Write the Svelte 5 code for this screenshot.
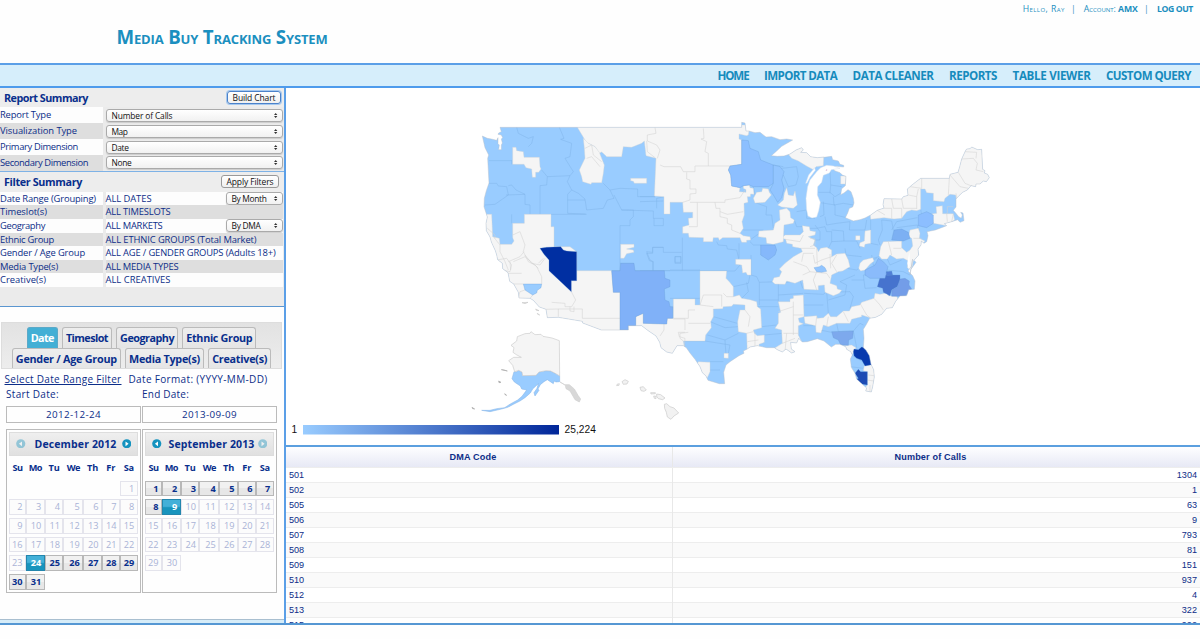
<script>
  function fit(node, width) {
    const count = [...node.textContent.trim()].length;
    const natural = node.getBoundingClientRect().width;
    node.style.letterSpacing = `${(width - natural) / count}px`;
  }

  const nav = [['HOME', 31], ['IMPORT DATA', 73], ['DATA CLEANER', 81], ['REPORTS', 48], ['TABLE VIEWER', 78], ['CUSTOM QUERY', 85]];

  const report = [
    ['Report Type', 51, 'Number of Calls', 61],
    ['Visualization Type', 77, 'Map', 16],
    ['Primary Dimension', 78, 'Date', 17],
    ['Secondary Dimension', 88, 'None', 20]
  ];

  const filters = [
    ['Date Range (Grouping)', 96, 'ALL DATES', 46, 'By Month', 35],
    ['Timeslot(s)', 47, 'ALL TIMESLOTS', 65],
    ['Geography', 45, 'ALL MARKETS', 57, 'By DMA', 29],
    ['Ethnic Group', 54, 'ALL ETHNIC GROUPS (Total Market)', 151],
    ['Gender / Age Group', 85, 'ALL AGE / GENDER GROUPS (Adults 18+)', 170],
    ['Media Type(s)', 58, 'ALL MEDIA TYPES', 73],
    ['Creative(s)', 46, 'ALL CREATIVES', 65]
  ];

  const tabs = [
    [['Date', 23, true], ['Timeslot', 42], ['Geography', 54], ['Ethnic Group', 66]],
    [['Gender / Age Group', 101], ['Media Type(s)', 71], ['Creative(s)', 55]]
  ];

  const days = [['Su', 10], ['Mo', 13], ['Tu', 11], ['We', 13], ['Th', 11], ['Fr', 9], ['Sa', 10]];

  const months = [
    { name: 'December 2012', width: 82, prev: false, next: true, offset: 6, count: 31, from: 24, to: 31, picked: 24 },
    { name: 'September 2013', width: 86, prev: true, next: false, offset: 0, count: 30, from: 1, to: 9, picked: 9 }
  ];

  const rows = [[501, 1304], [502, 1], [505, 63], [506, 9], [507, 793], [508, 81], [509, 151], [510, 937], [512, 4], [513, 322], [515, 922]];

  // The map is drawn in sections, each in thirds of a pixel from its own origin.
  const section = (x, y, text) =>
    text.trim().split(/\s+/).map((p) => {
      const [a, b] = p.split(',').map(Number);
      return `${(x + a / 3).toFixed(2)},${(y + b / 3).toFixed(2)}`;
    }).join(' ');

  const outline = [
    section(470, 115, '37,63 52,70 64,72 80,76 84,68 84,86 88,90 86,104 94,104 94,90 97,84 94,72 98,68 94,60 84,58 86,54 94,50 90,37'),
    section(640, 115, '305,37 305,22 315,24 318,48 327,48 345,53 360,52 378,66 395,65 420,74 440,72 458,75 425,94 410,108 394,122 412,124 432,123 450,117 468,105 485,98 490,105 482,112 500,113 512,125 532,128 552,126'),
    section(810, 115, '42,127 65,124 68,134 85,138 90,148 101,151 101,156 80,154 68,158 74,167 90,173 98,181 108,184 106,212 95,221 92,239 102,234 114,224 123,230 130,250 132,264 128,276 118,280 113,294 106,308 130,318 150,314 165,309 182,300 202,286 222,279 219,269 222,251 275,252 280,245 294,241 292,222 307,209 320,199 332,190 418,190 420,178 444,172 449,155 455,132 466,108 470,102 480,101 485,96 503,104 515,103 518,163 525,167 523,174 533,178 538,188 529,200 520,198 510,207 498,207 497,215 483,212 472,225 458,232 447,242 438,252 438,276 430,286 437,294 446,305 454,310 457,300 452,292 459,294 462,317 450,322 443,314 425,320 403,326 410,332 376,345 351,350 354,362 350,380 342,385 334,378 333,390 324,402 326,420 312,436 318,442 302,464 300,480'),
    section(670, 255, '728,12 724,35 714,48 728,62 735,78 733,103 716,104 710,122 690,123 677,139 667,158 650,160 635,178 617,187 599,190 588,210 580,223 582,250 580,278 588,286 598,302 603,328 611,344 613,366 608,395 604,411 587,408 590,399 577,388 560,372 555,355 544,337 541,312 547,300 542,290 530,283 527,275 510,268 497,268 484,276 462,258 442,251 412,260 397,261 386,250 380,264 362,262 364,282 375,290 365,294 348,282 337,291 322,284 313,278 290,278 262,272 240,276 232,282 220,288 222,295 207,302 180,320 168,330 161,352 164,386 148,386 114,376 108,363 97,353 90,335 75,313 60,294 49,278 40,272 21,272 7,295'),
    section(470, 255, '590,291 573,278 569,262 558,243 533,226 515,212 475,212 475,225 450,225 394,225 338,204 337,199 265,187 232,188 228,163 208,156 190,136 180,130 147,129 145,112 131,87 119,79 114,53 98,41 97,25 83,14 80,0'),
    section(470, 115, '76,407 64,381 60,366 49,347 48,325 52,306 42,275 43,250 49,227 57,204 55,166 53,130 56,120 45,98')
  ].join(' ');

  const grey = [
    [640, 115, '-192,30 -180,50 -165,75 -168,84 -155,85 -135,95 -122,115 -115,111 -105,120 -100,125 -55,125 -50,95 -25,97 5,85 13,78 18,122 48,130 43,243 72,245 72,297 90,297 90,262 128,262 130,292 158,292 158,308 145,310 147,330 128,335 128,355 145,355 147,367 190,368 190,380 218,380 220,368 235,368 238,376 248,368 300,368 305,382 320,382 320,376 332,375 330,365 310,362 300,355 310,340 306,320 313,300 312,265 324,262 322,245 331,245 332,237 342,238 340,220 330,218 328,210 310,212 310,220 318,224 318,232 298,230 300,218 275,213 272,180 265,165 270,153 305,148 305,75 297,72 297,57 320,62 325,60 330,30'],
    [470, 115, '340,70 355,85 375,95 388,112 395,130 403,150 400,175 395,203 365,203 363,208 338,200 335,185 328,165 345,130 343,100'],
    [470, 115, '128,97 138,97 140,107 160,110 162,127 208,127 210,155 213,162 206,172 197,172 197,187 187,187 185,162 168,158 162,148 128,148'],
    [470, 115, '482,190 530,190 530,205 493,205 490,199 482,197'],
    [470, 115, '452,388 492,388 492,397 470,402 490,405 492,412 470,416 462,430 452,430'],
    [470, 115, '20,298 65,298 66,320 68,365 88,370 90,388 125,388 132,378 128,368 128,325 163,325 163,298 243,298 243,335 252,335 252,395 300,395 320,410 320,467 425,467 430,532 450,532 450,700 0,700'],
    [670, 255, '-103,212 -103,185 -80,175 -80,205 -10,207 -8,190 10,190 10,132 75,132 75,150 90,150 90,48 170,48 168,70 178,80 190,95 190,125 208,120 215,130 240,134 260,140 262,155 272,162 275,218 250,225 253,235 262,242 283,240 283,262 267,268 270,295 232,300 230,235 205,230 203,200 210,165 225,165 225,150 190,148 185,154 160,155 158,161 130,162 130,185 122,200 124,218 107,240 105,258 40,258 50,320 -103,320'],
    [670, 255, '85,320 120,322 120,350 112,368 95,365 80,330'],
    [670, 255, '162,295 175,295 175,310 162,309'],
    [670, 255, '197,13 243,13 243,60 232,60 228,52 218,54 215,30 197,28'],
    [670, 255, '325,140 360,140 360,132 370,130 370,122 400,120 402,185 385,190 388,202 400,206 385,212 385,240 397,265 375,320 310,310 313,280 337,265 335,225 315,220 325,205 325,175 332,172'],
    [670, 255, '402,185 440,182 442,190 460,188 475,175 482,185 500,185 520,168 538,168 545,155 570,150 575,142 612,130 615,115 630,118 650,114 655,122 680,124 700,170 640,210 600,188 575,180 575,185 545,193 540,205 500,205 475,215 460,210 453,234 438,232 437,212 405,205'],
    [670, 255, '307,80 312,68 328,65 335,50 328,42 345,25 370,5 397,-10 393,-20 368,-25 367,-32 350,-35 347,-47 335,-50 345,-60 390,-60 400,-70 397,-88 418,-85 420,-73 437,-70 435,-60 415,-55 435,-45 430,-30 440,-22 445,-10 452,-20 470,-23 485,-15 485,5 500,-3 525,-5 535,15 540,35 518,48 505,50 485,60 480,85 500,92 502,102 515,106 508,115 490,122 465,112 463,90 445,92 445,105 402,103 398,75 375,85 350,78 345,88 315,87'],
    [640, 115, '340,250 350,232 365,230 368,220 385,222 388,232 394,240 375,262 345,264'],
    [640, 115, '413,270 430,255 433,235 440,218 445,240 460,242 465,228 472,270 460,280 425,276'],
    [640, 115, '418,285 440,280 450,290 452,308 463,315 460,325 432,330 430,380 400,388 380,385 378,368 355,365 357,348 400,345 405,325 420,315'],
    [640, 115, '440,112 490,85 552,110 550,152 528,155 520,164 498,152 475,138 455,130'],
    [810, 115, '92,183 110,183 108,207 92,207'],
    [810, 115, '137,362 150,362 150,375 137,375'],
    [810, 115, '165,348 182,345 182,385 165,388 163,397 148,393 150,383 163,378'],
    [810, 115, '182,313 180,290 222,240 335,170 420,170 460,90 550,90 550,210 440,262 437,240 420,238 405,250 402,260 370,257 370,235 350,233 345,222 332,222 332,283 320,287 305,285 290,290 275,310 252,312 222,308'],
    [810, 115, '378,275 397,272 398,296 430,296 434,315 410,332 370,325 365,297 380,295'],
    [810, 115, '207,422 212,395 220,380 275,378 275,398 290,412 300,405 308,393 305,370 295,365 300,345 325,340 330,355 328,370 345,378 325,402 326,430 310,437 305,464 292,458 294,437 280,430 260,432 240,420 232,432 215,432'],
    [810, 115, '146,460 150,445 160,435 188,428 192,438 180,448 165,465 152,468'],
    [670, 255, '520,272 545,270 558,278 548,297 530,295'],
    [670, 255, '600,328 630,330 620,430 575,412 592,390 592,350 580,347 583,332']
  ];

  const toned = [
    [640, 115, '305,75 325,77 330,100 355,110 362,135 400,150 400,205 385,215 340,215 328,210 310,212 300,218 275,213 272,180 265,165 270,153 305,148', '#8cbfff'],
    [640, 115, '400,150 420,155 432,170 425,195 432,220 425,248 413,262 400,240 390,225 400,205', '#92c5ff'],
    [640, 115, '362,390 405,390 410,405 405,420 385,435 362,420', '#85b8fb'],
    [470, 255, '425,47 450,47 452,25 492,25 495,47 583,47 585,70 600,75 600,95 583,102 585,135 597,140 600,155 608,155 608,190 592,190 590,207 520,205 520,175 497,185 497,212 475,212 475,225 450,225 450,112 430,112', '#80b1f8'],
    [470, 115, '210,400 230,397 272,395 280,405 290,408 320,410 320,497 304,497 304,530 237,467 237,435 222,418', '#002fa2'],
    [470, 255, '160,87 215,87 213,98 202,106 200,114 188,120 165,105', '#99ccff'],
    [670, 255, '432,38 448,35 455,31 465,38 470,49 455,52 440,50', '#92c5ff'],
    [670, 255, '632,60 650,58 652,50 665,60 690,60 690,78 682,95 665,105 660,122 640,112 638,100 622,95', '#4673ce'],
    [670, 255, '690,72 705,70 718,78 717,90 725,102 705,124 665,124 665,105 682,95', '#739de8'],
    [670, 255, '485,230 550,228 548,250 536,255 535,271 512,270 505,255 490,248', '#7da9ed'],
    [670, 255, '550,290 552,282 565,284 575,276 585,278 598,298 605,329 585,333 575,315 560,310 552,302', '#083aae'],
    [670, 255, '555,355 565,343 572,350 592,350 592,390 578,388 556,375 565,370', '#1d4bb4'],
    [810, 115, '252,345 275,342 295,352 300,370 280,378 245,375', '#7cb0f3'],
    [810, 115, '165,480 165,465 195,450 205,430 220,440 234,455 225,490 180,490', '#8abbfb'],
    [810, 115, '228,470 245,468 248,480 230,482', '#517fd7'],
    [810, 115, '325,300 350,290 370,300 370,325 350,338 325,332', '#8cbeff']
  ];

  const blueLines = [
    [470, 115, 'M57,137 125,137 M125,148 125,135 M140,37 145,55 175,70 190,65 185,85 175,95 M268,37 282,70 272,73 305,85 300,125 285,130 310,170 300,182 232,185 215,165 M57,205 80,205 85,213 110,215 115,240 75,268 45,270 M115,212 125,210 138,225 165,238 108,240 M165,238 165,268 180,270 180,298 M210,298 210,212 230,210 232,185 M300,182 292,200 305,225 293,238 293,295 347,297 M293,255 345,255 M305,225 325,235 345,252 350,285 400,280 412,255 432,250 420,225 400,205 M420,225 450,220 503,222 503,245 555,245 M432,240 455,285 490,285 490,305 480,315 480,332 450,332 450,467 M455,285 550,288 550,310 580,310 580,332 552,332 552,310 M560,280 560,250 580,246 M243,298 350,298 M125,298 125,325 M530,410 548,412 548,397 580,397 M530,410 540,435 550,440 550,467 M425,467 600,467 M450,445 490,445 490,465'],
    [640, 115, 'M0,245 45,245 M0,260 70,258 M127,368 127,467 M0,467 260,467 M230,380 235,390 260,392 262,402 290,405 297,435 M297,385 297,430 M330,375 365,350 M310,345 370,345 M365,270 380,275 378,300 395,300 400,340 M345,262 365,270 M330,380 340,390 362,390 M333,420 333,480 M20,415 38,415 38,397 70,397 70,412 125,412 M105,425 123,425 123,445 105,445Z M20,415 28,437 38,440 38,467 M425,160 470,155 475,185 468,210 445,215 430,180 M400,150 430,155 M360,200 360,215 M470,290 500,285 500,310 525,310 M463,315 470,335 487,335 M525,330 540,350 540,375 525,375 M340,215 345,240'],
    [810, 115, 'M25,232 60,232 75,245 108,225 M60,165 62,210 95,215 M62,210 60,235 M70,245 72,270 100,265 130,270 M40,260 42,300 30,305 M25,262 75,270 75,300 110,308 M0,340 20,340 45,335 50,350 65,350 65,380 55,400 M65,345 100,348 102,378 65,380 M45,305 50,330 80,325 120,320 M102,378 140,378 150,400 M120,320 118,345 165,345 170,315 M182,310 182,345 M182,385 205,390 M215,315 217,345 205,375 210,390 M215,315 245,318 250,345 M245,345 260,320 322,308 M260,338 322,330 325,345 M105,400 108,420 155,425 M190,430 207,425 M232,432 240,450 275,435 M332,283 335,300'],
    [670, 255, 'M0,130 90,130 M15,5 32,5 32,22 15,22Z M0,45 90,45 M170,48 195,48 210,30 M243,60 260,65 268,82 325,80 M268,82 268,150 M190,95 235,85 240,60 M230,82 235,110 215,130 M268,135 325,135 M325,80 325,140 M262,155 325,155 M276,215 320,210 M325,80 330,85 390,75 398,100 M325,120 400,115 M402,115 460,118 470,110 475,175 M475,135 525,120 530,90 510,80 555,60 M465,112 540,110 550,125 540,160 M402,150 460,150 M400,212 440,212 440,232 M455,232 455,215 M450,225 485,232 M500,205 505,230 550,228 570,205 580,210 M550,228 560,278 M130,185 202,205 M120,200 165,218 205,215 M112,240 165,255 205,235 M105,258 180,270 175,295 M165,255 168,300 M40,258 105,258 M120,320 160,320 M120,345 150,345 M580,60 585,100 620,98 M580,60 620,62 620,50 650,48 M545,75 582,75 M530,40 560,45 590,22 620,10 M540,335 580,340 M545,300 575,318 M283,240 337,235 M605,0 610,30 650,45 700,50 720,60']
  ];

  const greyLines = [
    [640, 115, 'M45,37 48,55 22,60 22,78 50,90 60,105 52,130 M20,78 22,110 45,128 M190,40 192,70 183,72 200,80 195,110 205,115 205,153 M60,150 72,155 122,155 130,170 165,170 165,153 305,153 M140,172 140,192 150,195 150,222 168,222 168,235 150,237 150,255 128,262 M150,262 172,262 172,335 147,335 M172,262 255,262 255,255 300,248 315,225 M225,262 228,280 240,280 240,305 262,310 262,325 275,330 275,345 300,355 M240,290 262,298 310,290'],
    [470, 115, 'M345,100 365,90 370,120 395,140 M350,130 365,125 390,155 M52,340 75,360 75,370 M70,365 90,390 90,410 105,440 115,465 M128,360 150,350 165,390 160,410 175,440 195,450 205,460 M115,440 150,425 162,410 M120,440 122,465 M205,445 220,430'],
    [470, 255, 'M80,15 110,10 125,30 120,50 98,45 M130,20 165,5 200,35 215,65 215,87 M165,0 185,25 210,30 225,10 M128,87 160,87 M110,55 155,55 M165,105 150,110 145,128 M180,130 190,118 M304,110 317,135 305,155 285,155 285,145 245,142 M227,163 265,162 265,185 M265,162 337,162 337,190 450,190 M300,155 300,168 312,170 312,155 M570,243 582,225 582,207 M610,192 645,192 645,225 M645,232 625,232 628,245 645,250 642,290'],
    [670, 255, 'M10,190 55,190 55,165 75,165 M55,205 120,205 M40,258 30,250 30,235 55,232 M100,120 90,150 130,155 M190,125 170,125 160,115 M100,120 155,120 155,155 M230,235 250,230 M225,165 240,185 235,215 M232,260 265,255 M255,232 255,275 M370,140 370,240 M370,180 400,180 M340,235 385,235 M337,265 375,250 M350,235 345,290 M325,170 370,155 M440,185 437,212 M475,185 470,215 M520,170 535,200 M570,145 590,180 600,188 M612,130 630,150 640,165 M370,20 410,35 420,50 398,60 M430,0 435,25 455,15 485,5 M418,50 470,55 480,70 M500,0 485,25 500,50 M393,-20 435,-20 M345,-47 390,-40 400,-60 M430,-5 400,-5 395,20 M595,360 612,362 M590,375 612,378 M600,390 600,410 M440,50 430,75 440,105'],
    [810, 115, 'M245,252 250,280 275,280 275,310 M275,252 280,280 320,280 M222,280 245,280 245,310 M200,285 225,300 M295,240 320,245 325,222 M300,215 335,220 335,190 M320,245 320,282 M418,190 415,240 M420,180 450,215 475,220 M445,172 465,205 490,215 M455,132 490,130 502,145 498,165 520,170 M465,110 500,112 498,130 M430,275 412,275 412,295 M440,250 438,235 M410,295 412,320 M430,297 425,320 M0,370 15,372 15,390 0,395 M20,400 22,450 M60,417 62,460 M235,380 245,420 M275,400 250,400 M310,370 335,370']
  ];

  const islands = [
    '441,388 448,386 447,391 440,392', '456,380 465,374 475,379 471,387 460,388', '510,397 520,395 529,405 522,409 513,407', '542,413 556,413 556,416 543,417', '560,417 572,419 585,429 578,434 565,431 560,424', '551,423 558,424 558,431 553,430', '583,448 590,446 600,455 612,459 626,474 612,483 603,493 592,486 589,472 584,460', '156,143 174,142 165,146', '197,162 207,167 199,166', '202,175 209,180 203,178'
  ];
</script>

{#snippet arrows()}
  <svg class="arrows" viewBox="0 0 4 6"><path d="M0 2.4 2 0 4 2.4ZM0 3.6H4L2 6Z" /></svg>
{/snippet}

{#snippet circle(on, dir)}
  <svg class="circle" class:off={!on} viewBox="0 0 10 10">
    <circle cx="5" cy="5" r="4.8" />
    <path d={dir === 'prev' ? 'M6.3 2.5 3.1 5 6.3 7.5Z' : 'M3.7 2.5 6.9 5 3.7 7.5Z'} />
  </svg>
{/snippet}

<div class="page">
  <header>
    <div class="account">
      <span class="sc" use:fit={42}>Hello, Ray</span><i>|</i>
      <span class="sc" use:fit={54}>Account: <b>AMX</b></span><i>|</i>
      <b use:fit={36}>LOG OUT</b>
    </div>
    <h1><span use:fit={211}>Media Buy Tracking System</span></h1>
  </header>
  <nav>{#each nav as [label, w]}<a href="#top"><span use:fit={w}>{label}</span></a>{/each}</nav>

  <main>
    <aside>
      <section class="summary">
        <div class="head"><h2 use:fit={84}>Report Summary</h2><button class="focus"><span use:fit={43}>Build Chart</span></button></div>
        {#each report as [label, w, value, vw]}
          <div class="row tall">
            <div class="label"><span use:fit={w}>{label}</span></div>
            <div class="select"><span use:fit={vw}>{value}</span>{@render arrows()}</div>
          </div>
        {/each}
        <div class="head second"><h2 use:fit={78}>Filter Summary</h2><button><span use:fit={47}>Apply Filters</span></button></div>
        {#each filters as [label, w, value, vw, choice, cw]}
          <div class="row short">
            <div class="label"><span use:fit={w}>{label}</span></div>
            <div class="value"><span use:fit={vw}>{value}</span>
              {#if choice}<div class="select small"><span use:fit={cw}>{choice}</span>{@render arrows()}</div>{/if}
            </div>
          </div>
        {/each}
      </section>

      <section class="picker">
        <div class="tabs">
          {#each tabs as line}
            <div class="tabline">
              {#each line as [label, w, on]}<div class="tab" class:on><span use:fit={w}>{label}</span></div>{/each}
            </div>
          {/each}
        </div>
        <div class="hint"><u use:fit={117}>Select Date Range Filter</u><span use:fit={139}>Date Format: (YYYY-MM-DD)</span></div>
        <div class="ends"><div><span use:fit={53}>Start Date:</span></div><div><span use:fit={47}>End Date:</span></div></div>
        <div class="pair inputs"><div><span use:fit={55}>2012-12-24</span></div><div><span use:fit={55}>2013-09-09</span></div></div>
        <div class="pair">
          {#each months as m}
            <div class="calendar">
              <div class="month">{@render circle(m.prev, 'prev')}<span use:fit={m.width}>{m.name}</span>{@render circle(m.next, 'next')}</div>
              <div class="grid week">{#each days as [d, w]}<div><span use:fit={w}>{d}</span></div>{/each}</div>
              <div class="grid dates">
                {#each Array(m.offset) as _}<div></div>{/each}
                {#each Array(m.count) as _, i}
                  <div class="day" class:live={i + 1 >= m.from && i + 1 <= m.to} class:picked={i + 1 === m.picked}>{i + 1}</div>
                {/each}
              </div>
            </div>
          {/each}
        </div>
      </section>
    </aside>

    <div class="content">
      <div class="map">
        <svg viewBox="286 88 914 357" width="914" height="357">
          <defs>
            <clipPath id="land"><polygon points={outline} /></clipPath>
            <linearGradient id="scale"><stop offset="0" stop-color="#99ccff" /><stop offset="1" stop-color="#002699" /></linearGradient>
          </defs>
          <polygon points={outline} fill="#99ccff" />
          <g clip-path="url(#land)">
            {#each blueLines as [x, y, d]}<path {d} transform={`translate(${x} ${y}) scale(.33333)`} class="blueline" />{/each}
            {#each grey as [x, y, p]}<polygon points={section(x, y, p)} class="greyarea" />{/each}
            {#each greyLines as [x, y, d]}<path {d} transform={`translate(${x} ${y}) scale(.33333)`} class="greyline" />{/each}
            {#each toned as [x, y, p, fill]}<polygon points={section(x, y, p)} {fill} class="tone" />{/each}
          </g>
          <polygon points={outline} class="coast" />
          <g fill="#fff" stroke="#d9e3ee" stroke-width=".5">
            <polygon points={section(640, 115, '518,185 530,170 542,158 560,151 580,153 600,160 574,164 568,174 550,181 545,202 533,215 532,240 541,262 536,287 530,306 516,309 504,303 500,285 498,250 503,215 510,195')} />
            <polygon points={section(640, 115, '497,205 506,180 524,158 526,166 510,187 501,204')} />
            <polygon points={section(810, 115, '292,445 298,410 301,387 298,410 300,445 297,465')} stroke="none" />
          </g>
          <polygon points={section(640, 115, '557,166 561,162 562,166 558,168')} fill="#d7b8d8" />
          <g transform="translate(470 255) scale(.33333)">
            <path d="M132,350 140,350 146,346 156,351 158,362 198,361 207,351 228,347 242,348 254,354 264,352 269,363 269,380 258,381 252,378 250,386 232,374 222,380 211,389 204,402 207,406 195,423 192,413 201,400 205,386 188,402 181,414 165,428 150,438 132,447 113,457 91,463 60,470 35,466 60,466 80,461 104,458 121,447 143,435 156,424 170,405 155,402 151,393 133,381 126,371Z" fill="#99ccff" stroke="#84b3e5" stroke-width="1.5" />
            <path d="M134,350 128,331 116,317 131,307 154,307 139,299 129,292 132,278 123,271 140,258 142,245 165,236 180,235 183,230 195,239 213,238 219,244 246,249 268,257 269,363 254,354 242,348 228,347 207,351 198,361 158,362 156,351 146,346Z" fill="#f5f5f5" stroke="#ccc" stroke-width="2" />
            <path d="M270,381 284,389 298,389 313,402 324,421 332,432 328,441 315,434 300,408 288,401 286,391Z" fill="#d8d8d8" stroke="#d0d0d0" stroke-width="2" />
            <path d="M94,344 112,348 102,345ZM86,378 93,382 87,383ZM104,416 110,421 106,420ZM6,457 14,462 8,461Z" fill="#aaa" stroke="#aaa" stroke-width="2" />
            {#each islands as p}<polygon points={p} fill="#f2f2f2" stroke="#c8c8c8" stroke-width="2" />{/each}
          </g>
          <rect x="303" y="425" width="256" height="9.5" fill="url(#scale)" />
          <text x="291.5" y="433">1</text><text x="564.5" y="433" textLength="31.5">25,224</text>
        </svg>
      </div>
      <div class="table">
        <div class="line th"><div><span use:fit={47}>DMA Code</span></div><div><span use:fit={72}>Number of Calls</span></div></div>
        {#each rows as [code, calls]}<div class="line"><div>{code}</div><div>{calls}</div></div>{/each}
      </div>
    </div>
  </main>
</div>

<style>
  :global(body) { margin: 0; background: #fff; overflow: hidden; }
  * { box-sizing: border-box; }
  .page { width: 1200px; height: 639px; display: flex; flex-direction: column; font-family: "Open Sans", "Noto Sans", sans-serif; color: #0c2d88; background: #fefefe; }
  span, u, h2, b { white-space: nowrap; }
  span, u, h2, .account > b { display: inline-block; }
  header { height: 63px; flex: none; color: #1b8fbf; }
  .account { height: 18px; padding-right: 7px; display: flex; justify-content: flex-end; align-items: center; font-size: 8.7px; line-height: 18px; font-weight: 500; }
  .account i { font-style: normal; margin: 0 8.2px 0 6.2px; }
  .sc, h1 { font-variant: small-caps; }
  h1 { margin: 6px 0 0 116.5px; font-size: 18.7px; line-height: 26px; font-weight: 700; }
  nav { height: 25px; flex: none; border-top: 2px solid #5b9fe7; border-bottom: 2px solid #4e9bec; background: #d6eefb; display: flex; justify-content: flex-end; align-items: center; gap: 15.5px; padding-right: 9px; font-size: 11.6px; line-height: 21px; font-weight: 700; }
  nav a { color: #168bbd; text-decoration: none; }
  main { height: 537px; display: flex; border-bottom: 2px solid #5597d3; }
  aside { width: 286px; flex: none; border-right: 2px solid #5b9fe7; display: flex; flex-direction: column; box-shadow: inset 0 -3px #d6ecf8, inset 0 -4px #a9bfd0; }
  .summary { height: 219px; flex: none; background: #ebebeb; border-bottom: 1px solid #5b96d0; }
  .head { height: 19.4px; padding: 0 3px 0 4px; display: flex; align-items: center; justify-content: space-between; background: #ededed; }
  .head.second { height: 21.2px; border-top: 1px solid #7eb2e6; padding-right: 5px; }
  h2 { margin: 0; font-size: 10.8px; line-height: 16px; font-weight: 700; color: #092f8c; }
  button { height: 13px; border: 1px solid #999; border-radius: 3px; background: linear-gradient(#fff, #f0f0f0); color: #111; font: 8.5px/11px "Open Sans", sans-serif; padding: 0 4.5px; }
  button.focus { border-color: #4b82ca; box-shadow: 0 0 0 1px #a5c8ef; }
  .row { display: grid; grid-template-columns: 102.5px 177px; column-gap: 3px; font-size: 9.4px; }
  .tall { height: 15.8px; line-height: 16.6px; }
  .short { height: 13.6px; line-height: 14px; }
  .label, .value { background: #fdfdfd; height: 100%; }
  .row:nth-child(odd) .label { background: #dedede; }
  .short:nth-child(even) .label, .short:nth-child(even) .value { background: #dedede; }
  .short:nth-child(odd) .label { background: #fdfdfd; }
  .value { display: flex; justify-content: space-between; align-items: center; }
  .select { height: 13px; margin-top: 1.6px; padding: 0 4px 0 5px; border: 1px solid #aaa; border-radius: 3px; background: linear-gradient(#fff, #f1f1f1); color: #111; font-size: 8.4px; line-height: 11px; display: flex; align-items: center; justify-content: space-between; box-shadow: 0 1px 1px #ccc; }
  .select.small { width: 57px; height: 13px; margin: 0; padding: 0 4px 0 5px; }
  .arrows { width: 3.4px; height: 5px; fill: #333; }
  .picker { padding: 15px 0 0 1px; }
  .tabs { width: 281px; height: 47px; border: 1px solid #ddd; background: linear-gradient(#e2e2e2, #ededed); padding-top: 4px; }
  .tabline { display: flex; justify-content: center; gap: 4.2px; height: 20.5px; }
  .tab { height: 20.5px; padding: 0 3px; border: 1px solid #bbb; border-bottom: 0; border-radius: 3px 3px 0 0; background: linear-gradient(#eee, #e5e5e5); font-size: 10.8px; line-height: 19px; font-weight: 700; color: #092f8c; }
  .tab.on { background: #43afd5; color: #fff; border-color: #5ba9c8; }
  .hint { height: 19px; padding: 2px 0 0 3.5px; display: flex; gap: 7px; font-size: 10px; line-height: 17px; }
  .ends { display: grid; grid-template-columns: 136px 1fr; padding-left: 5px; height: 18px; font-size: 10px; line-height: 13px; }
  .pair { display: flex; gap: 1px; padding-left: 5px; }
  .inputs { height: 23px; }
  .inputs div { width: 135px; height: 17px; border: 1px solid #bbb; text-align: center; font-size: 9.8px; line-height: 15px; }
  .calendar { width: 135px; height: 164px; border: 1px solid #bbb; padding: 2px; }
  .month { height: 24px; border: 1px solid #ddd; background: linear-gradient(#efefef, #e0e0e0); display: flex; align-items: center; justify-content: space-between; padding: 0 6px; font-size: 10.5px; line-height: 20px; font-weight: 700; color: #092f8c; }
  .month span { margin: 0 0 1px 4px; }
  .circle { width: 9.5px; height: 9.5px; fill: #1593bf; flex: none; margin-bottom: 1px; }
  .circle path { fill: #fff; }
  .circle.off { opacity: .4; }
  .grid { display: grid; grid-template-columns: 17px 18.7px 18.7px 19.8px 18.7px 18px 17.8px; }
  .week { height: 24.6px; line-height: 23px; font-size: 9.2px; font-weight: 700; text-align: center; color: #092f8c; }
  .dates { grid-auto-rows: 15.8px; row-gap: 2.85px; font-size: 9.2px; line-height: 14px; }
  .day { border: 1px solid #e4e4ec; background: #fcfcfc; color: #a9b3d6; text-align: right; padding-right: 2.4px; }
  .day.live { border-color: #b8b8b8; background: linear-gradient(#f1f1f1 49%, #e7e7e7 50%); color: #092f8c; font-weight: 700; }
  .day.picked { border-color: #2386ad; background: linear-gradient(#43b0d8 45%, #1894bd 55%); color: #fff; }
  .content { width: 914px; display: flex; flex-direction: column; overflow: hidden; background: #fff; }
  .map { height: 359px; flex: none; border-bottom: 2px solid #5b9fdf; }
  .map svg { display: block; }
  .map text { font: 10.2px "Liberation Sans", Arial, sans-serif; fill: #111; }
  .blueline { fill: none; stroke: #80b4e8; stroke-width: 1.4; }
  .greyline { fill: none; stroke: #d2d2d2; stroke-width: 1.6; }
  .greyarea { fill: #f5f5f5; stroke: #d0d3d6; stroke-width: .4; }
  .tone { stroke: #6298d4; stroke-width: .3; }
  .coast { fill: none; stroke: #b9c1ca; stroke-width: .45; }
  .table { font: 9.1px/15px "Liberation Sans", Arial, sans-serif; }
  .line { display: grid; grid-template-columns: 387px 527px; height: 15px; border-top: 1px solid #ededed; }
  .line:nth-child(odd) { background: #fafafa; }
  .line div { padding: 0 3px; border-right: 1px solid #e8e8e8; }
  .line div:last-child { text-align: right; border: 0; }
  .line.th { height: 20px; border: 0; background: linear-gradient(#fefeff, #e7e9f5); font-weight: 700; line-height: 20px; }
  .line.th div, .line.th div:last-child { text-align: center; padding-right: 15px; }
</style>
